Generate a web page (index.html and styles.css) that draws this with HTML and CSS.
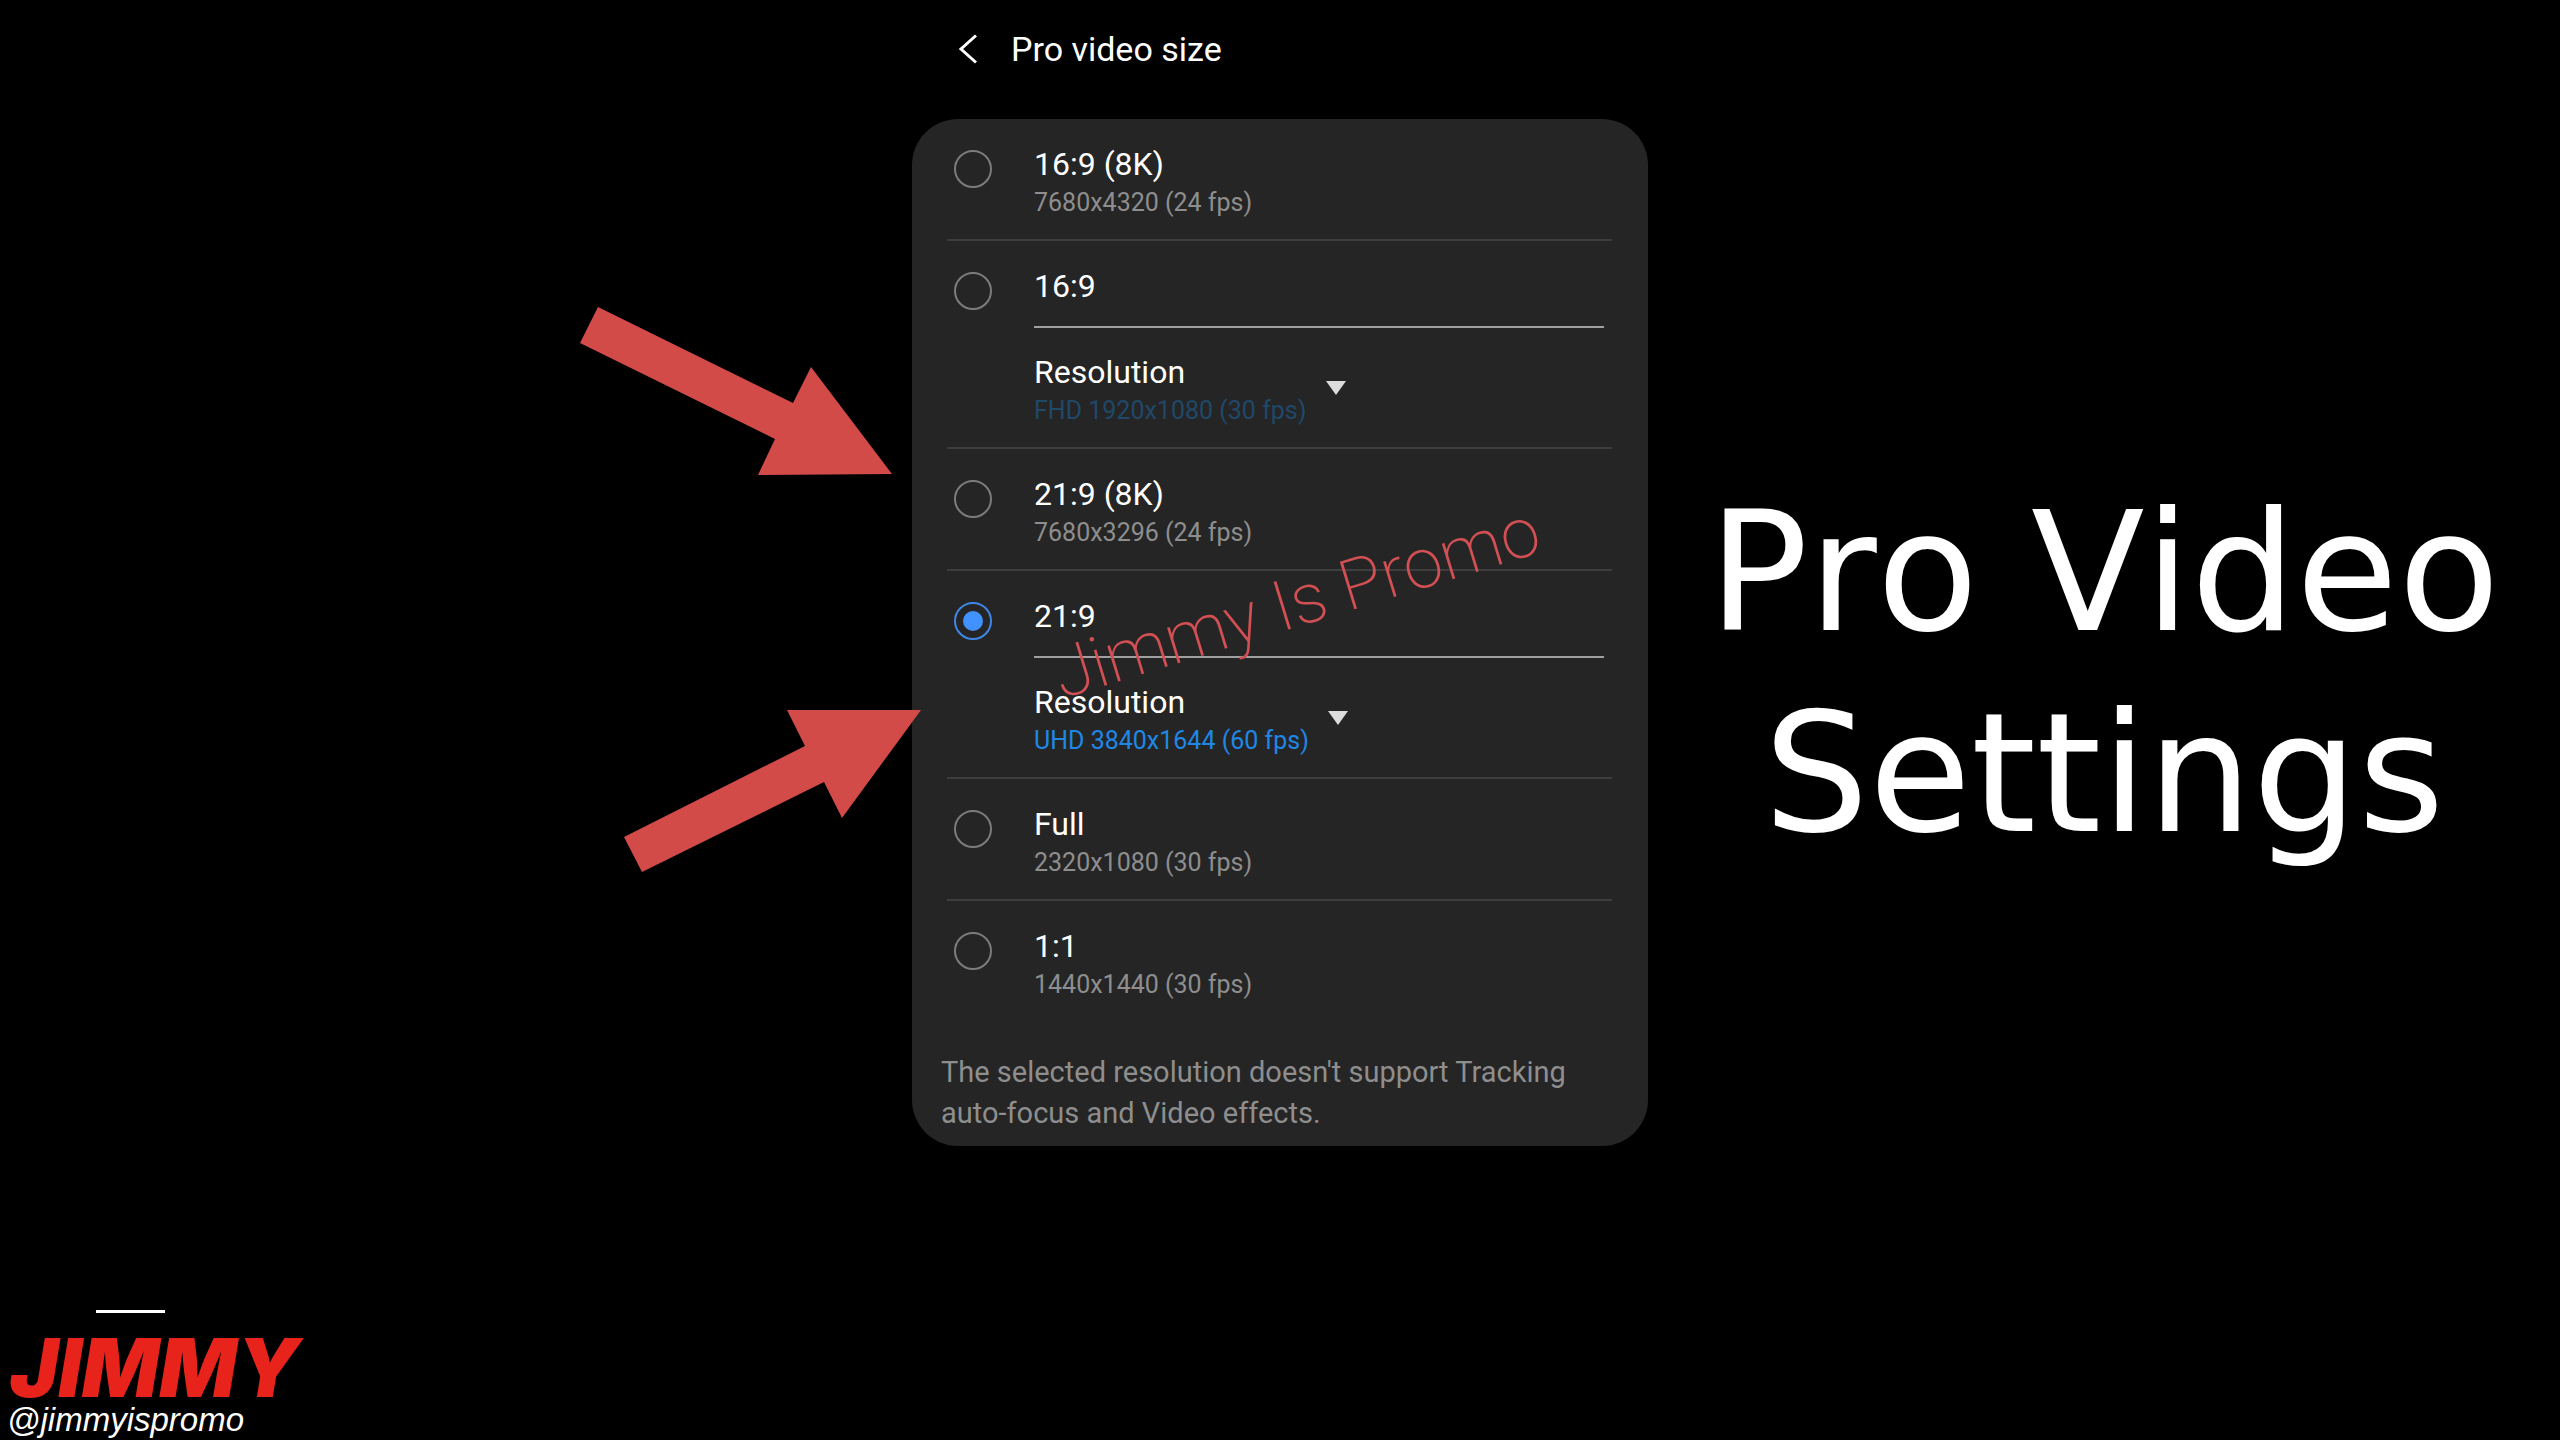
FILE: index.html
```html
<!DOCTYPE html>
<html lang="en">
<head>
    <meta charset="UTF-8">
    <meta name="viewport" content="width=device-width, initial-scale=1.0">
    <title>Pro Video Settings</title>
    <link rel="stylesheet" href="styles.css">
</head>
<body>

    <div class="page">
        <!-- Channel name -->
        <div class="brand">
            <hr class="brand-line">
            <div class="brand-name">JIMMY</div>
            <div class="brand-handle">@jimmyispromo</div>
        </div>

        <!-- Phone settings screen -->
        <main class="phone">
            <header class="phone-header">
                <button type="button" class="back" aria-label="Back">
                    <svg width="20" height="30" viewBox="0 0 20 30"><path d="M18 1.5 L3 15 L18 28.5" fill="none" stroke="#fff" stroke-width="3"/></svg>
                </button>
                <h2>Pro video size</h2>
            </header>

            <form class="card">
                <div class="option">
                    <input type="radio" name="size" id="size-16-9-8k">
                    <label for="size-16-9-8k">16:9 (8K) <small>7680x4320 (24 fps)</small></label>
                </div>

                <div class="option">
                    <input type="radio" name="size" id="size-16-9">
                    <div class="option-body">
                        <label for="size-16-9" class="underlined">16:9</label>
                        <div class="resolution off">
                            <label for="res-16-9">Resolution</label>
                            <select id="res-16-9">
                                <option>FHD 1920x1080 (30 fps)</option>
                            </select>
                            <svg class="caret" width="20" height="14" viewBox="0 0 20 14"><path d="M0 0 H20 L10 14 Z" fill="#dcdcdc"/></svg>
                        </div>
                    </div>
                </div>

                <div class="option">
                    <input type="radio" name="size" id="size-21-9-8k">
                    <label for="size-21-9-8k">21:9 (8K) <small>7680x3296 (24 fps)</small></label>
                </div>

                <div class="option">
                    <input type="radio" name="size" id="size-21-9" checked>
                    <div class="option-body">
                        <label for="size-21-9" class="underlined">21:9</label>
                        <div class="resolution">
                            <label for="res-21-9">Resolution</label>
                            <select id="res-21-9">
                                <option>UHD 3840x1644 (60 fps)</option>
                            </select>
                            <svg class="caret" width="20" height="14" viewBox="0 0 20 14"><path d="M0 0 H20 L10 14 Z" fill="#dcdcdc"/></svg>
                        </div>
                    </div>
                </div>

                <div class="option">
                    <input type="radio" name="size" id="size-full">
                    <label for="size-full">Full <small>2320x1080 (30 fps)</small></label>
                </div>

                <div class="option">
                    <input type="radio" name="size" id="size-1-1">
                    <label for="size-1-1">1:1 <small>1440x1440 (30 fps)</small></label>
                </div>

                <p class="note">The selected resolution doesn't support Tracking auto-focus and Video effects.</p>
            </form>

            <!-- Drawn over the card -->
            <div class="watermark">Jimmy Is Promo</div>
            <svg class="arrows" width="344" height="568" viewBox="0 0 344 568">
                <g fill="#d24b48">
                    <path d="M18 1 L213 97 L231 61 L312 168 L178 169 L195 133 L0 37 Z"/>
                    <path d="M44 531 L225 440 L207 404 H341 L262 512 L244 476 L62 566 Z"/>
                </g>
            </svg>
        </main>

        <h1 class="headline">Pro Video Settings</h1>
    </div>

</body>
</html>
```

FILE: styles.css
```css
* {
    box-sizing: border-box;
}
body {
    margin: 0;
    background-color: #000;
    color: #fff;
    font-family: Roboto, sans-serif;
}
.page {
    display: grid;
    grid-template-columns: 1fr 736px 1fr;
    min-height: 100vh;
    overflow: hidden;
}

/* Channel name */
.brand {
    align-self: end;
    padding: 0 0 4px 7px;
    font-family: "Liberation Sans", Arial, sans-serif;
    font-style: italic;
}
.brand-line {
    width: 69px;
    height: 3px;
    margin: 0 0 20px 89px;
    border: none;
    background-color: #fff;
}
.brand-name {
    padding-left: 3px;
    color: #e8231c;
    font-family: Inter, sans-serif;
    font-size: 81px;
    font-weight: 900;
    line-height: 70px;
}
.brand-handle {
    font-size: 33px;
    line-height: 33px;
}

/* Phone screen */
.phone {
    position: relative;
}
.phone-header {
    display: flex;
    align-items: center;
    height: 119px;
    padding: 0 0 22px 46px;
}
.back {
    display: flex;
    padding: 0;
    border: none;
    background: none;
    cursor: pointer;
}
h2 {
    margin: 0 0 0 33px;
    font-size: 34px;
    font-weight: 400;
    line-height: 40px;
}
.card {
    padding: 0 36px 12px 35px;
    border-radius: 46px;
    background-color: #252525;
}
.option {
    display: grid;
    grid-template-columns: 38px 1fr;
    column-gap: 42px;
    padding: 26px 8px 17px 7px;
    border-bottom: 2px solid #3e3e3e;
    font-size: 32px;
    line-height: 38px;
}
.option:last-of-type {
    border-bottom: none;
}
.option small {
    display: block;
    color: #8e8e8e;
    font-size: 25px;
    line-height: 39px;
}
input[type="radio"] {
    display: grid;
    place-items: center;
    width: 38px;
    height: 38px;
    margin: 5px 0 0;
    border: 2px solid #7c7c7c;
    border-radius: 50%;
    appearance: none;
}
input[type="radio"]:checked {
    border-color: #3f87e6;
}
input[type="radio"]:checked::before {
    content: "";
    width: 20px;
    height: 20px;
    border-radius: 50%;
    background-color: #4191ff;
}
.underlined {
    display: block;
    padding-bottom: 21px;
    border-bottom: 2px solid #a0a0a0;
}
.resolution {
    display: grid;
    grid-template-columns: max-content max-content;
    align-items: center;
    column-gap: 19px;
    padding-top: 25px;
}
.resolution select {
    grid-row: 2;
    height: 39px;
    padding: 0;
    border: none;
    background: none;
    color: #1f87e5;
    font: 25px/39px Roboto, sans-serif;
    appearance: none;
}
.resolution.off select {
    color: #1f4869;
}
.caret {
    grid-column: 2;
    grid-row: 1 / 3;
    margin-bottom: 8px;
}
.note {
    margin: 31px -6px 0;
    color: #8e8e8e;
    font-size: 29px;
    line-height: 41px;
}

/* Overlays */
.watermark {
    position: absolute;
    top: 562px;
    left: 132px;
    color: #d25054;
    font-size: 70px;
    font-weight: 200;
    line-height: 80px;
    white-space: nowrap;
    transform: rotate(-17deg);
}
.arrows {
    position: absolute;
    top: 306px;
    left: -332px;
}

.headline {
    margin: 0;
    padding: 472px 20px 0;
    font-family: "DejaVu Sans", Verdana, sans-serif;
    font-size: 166px;
    font-kerning: none;
    font-weight: 400;
    line-height: 201px;
    text-align: center;
}
```
